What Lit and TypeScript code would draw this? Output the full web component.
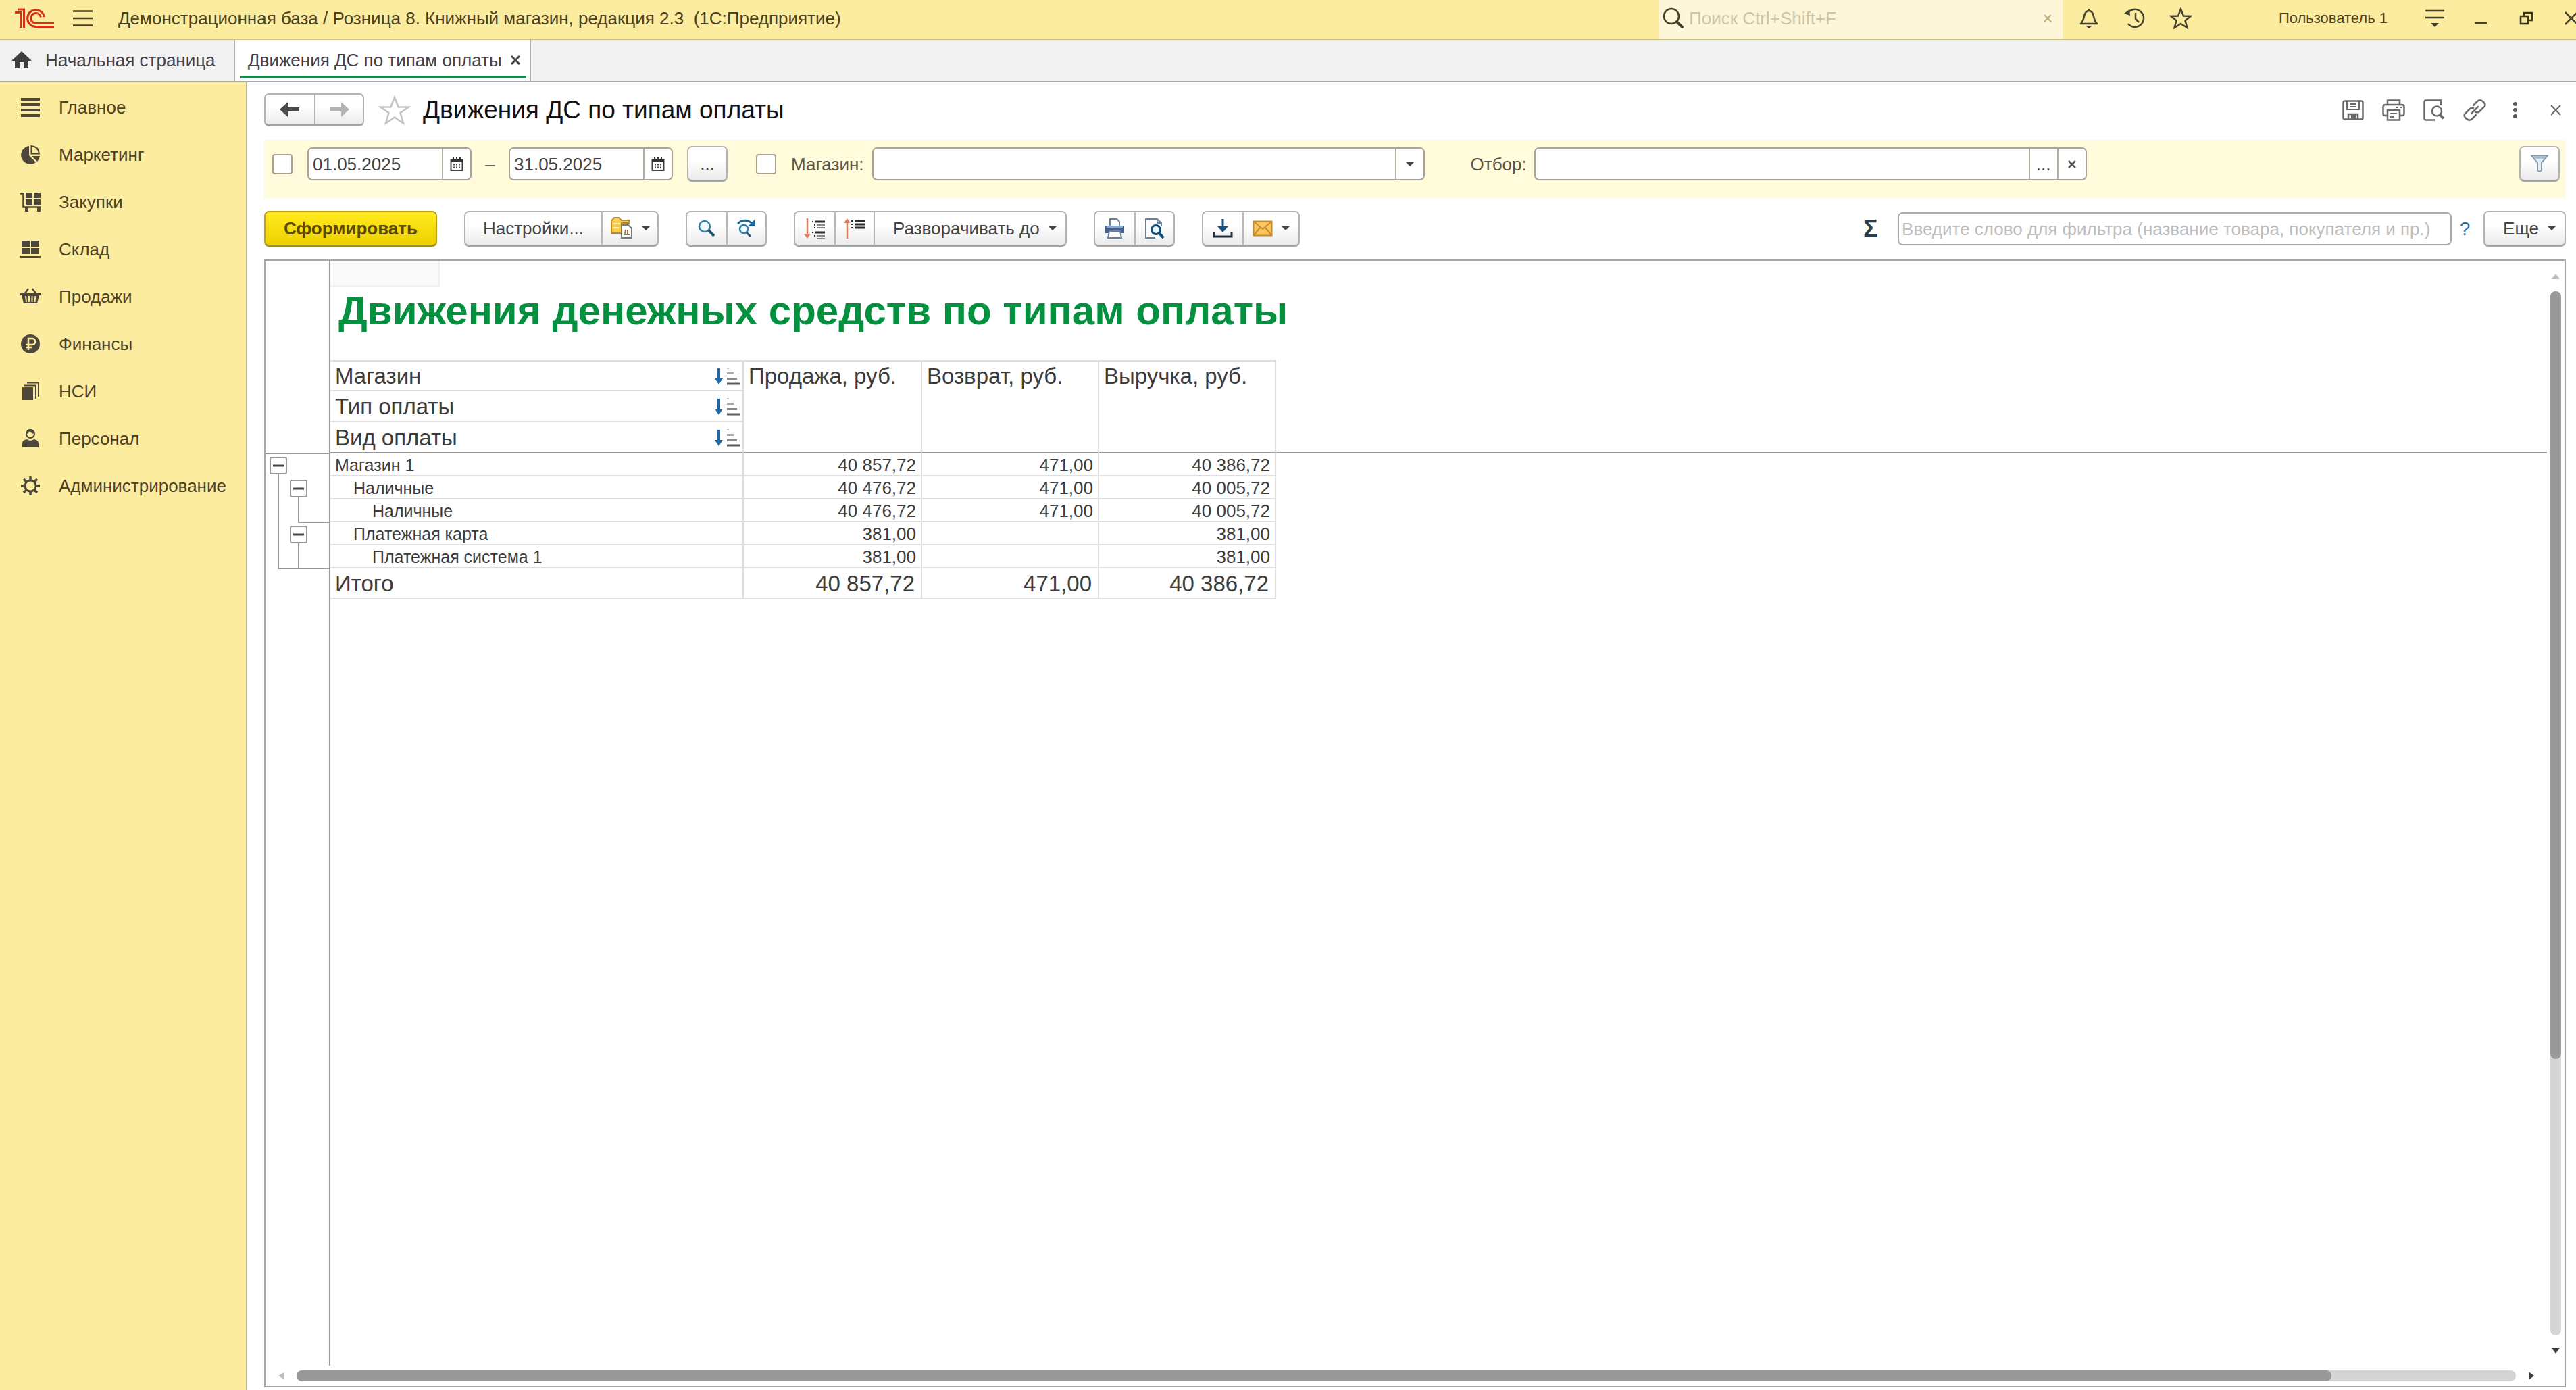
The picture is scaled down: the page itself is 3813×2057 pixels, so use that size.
import { LitElement, html, svg, css, nothing, type TemplateResult } from "lit";
import { customElement, state } from "lit/decorators.js";
import { classMap } from "lit/directives/class-map.js";
import { styleMap } from "lit/directives/style-map.js";

const pic = (w: number, h: number, body: TemplateResult) =>
  html`<svg width=${w} height=${h} viewBox="0 0 ${w} ${h}" fill="none" aria-hidden="true">${body}</svg>`;

const icons = {
  logo: pic(58, 30, svg`<g stroke="#d5301c" stroke-width="3"><path d="M4 2H13.5V29"/><path d="M0 6.500H8.500V29"/><path d="M43.500 13A12.500 12.500 0 1 0 31 27.500H58"/><path d="M38.500 13.500A7.500 7.500 0 1 0 31 22.500H58"/></g>`),
  burger: pic(29, 26, svg`<path d="M0 2.500H29M0 13H29M0 23.500H29" stroke="#4a421f" stroke-width="2.500"/>`),
  search: pic(32, 32, svg`<circle cx="14" cy="13" r="11" stroke="#44402c" stroke-width="2.500"/><path d="M22 21L30 29" stroke="#44402c" stroke-width="4" stroke-linecap="round"/>`),
  bell: pic(30, 32, svg`<path d="M15 2v3M3 24H27C24 21 23 18 22 13C21 8 19 5 15 5S9 8 8 13C7 18 6 21 3 24Z" stroke="#44402c" stroke-width="2.500" stroke-linejoin="round"/><path d="M10 27H20L15 31Z" fill="#44402c"/>`),
  history: pic(32, 32, svg`<path d="M4.500 10A13 13 0 1 1 6 24" stroke="#44402c" stroke-width="2.500"/><path d="M0 9L9 12L8 3Z" fill="#44402c"/><path d="M17 8V17L22 22" stroke="#44402c" stroke-width="2.500"/>`),
  star: pic(34, 32, svg`<path d="M17 2.500L21 12.500L31.500 13L23.500 19.500L26.500 30L17 24L7.500 30L10.500 19.500L2.500 13L13 12.500Z" stroke="#44402c" stroke-width="2.500"/>`),
  sysmenu: pic(30, 28, svg`<path d="M1 3H29M1 13H29" stroke="#44402c" stroke-width="2.500"/><path d="M9 21H21L15 27Z" fill="#44402c"/>`),
  minimize: pic(20, 20, svg`<path d="M1 17H19" stroke="#44402c" stroke-width="2.500"/>`),
  restore: pic(22, 20, svg`<path d="M2 7H13V18H2ZM7 7V2H19V13H13" stroke="#3b341a" stroke-width="2.500"/>`),
  closeWin: pic(17, 20, svg`<path d="M1 1L19 19M19 1L1 19" stroke="#44402c" stroke-width="2.500"/>`),
  home: pic(30, 26, svg`<path d="M15 0L30 14H25V25H18V16H12V25H5V14H0Z" fill="#3f3f3f"/>`),
  tabClose: pic(16, 16, svg`<path d="M2 2L14 14M14 2L2 14" stroke="#444" stroke-width="3"/>`),
  smallClose: pic(14, 14, svg`<path d="M2 2L12 12M12 2L2 12" stroke="#555" stroke-width="2.500"/>`),
  paleClose: pic(14, 14, svg`<path d="M2 2L12 12M12 2L2 12" stroke="#b9ab79" stroke-width="2"/>`),
  back: pic(30, 22, svg`<path d="M0 11L12 0V8H29V14H12V22Z" fill="#4a4a4a"/>`),
  forward: pic(30, 22, svg`<path d="M30 11L18 0V8H1V14H18V22Z" fill="#b3b3b3"/>`),
  favorite: pic(48, 46, svg`<path d="M24 4L29.500 18.500H45L32.500 27L37 42.500L24 33.500L11 42.500L15.500 27L3 18.500H18.500Z" stroke="#c3c3c3" stroke-width="2.500"/>`),
  save: pic(32, 30, svg`<g stroke="#6a6a6a" stroke-width="2.500"><path d="M4 1.500H28Q30.500 1.500 30.500 4V26Q30.500 28.500 28 28.500H4Q1.500 28.500 1.500 26V4Q1.500 1.500 4 1.500Z"/><path d="M7 2V14H25V2M11 6H21M11 10H21" stroke-width="2"/><path d="M9 28V21H23V28"/></g><path d="M13 22H20V28H13Z" fill="#6a6a6a"/>`),
  print: pic(34, 32, svg`<g stroke="#6a6a6a" stroke-width="2.500"><path d="M8 8V1.500H26V8M8 24H4Q1.500 24 1.500 21V11Q1.500 8 5 8H29Q32.500 8 32.500 11V21Q32.500 24 30 24H26"/><path d="M8 16H26V30.500H8Z"/><path d="M12 21H22M12 26H18" stroke-width="2"/></g><path d="M20 11H23V13H20ZM26 11H29V13H26Z" fill="#6a6a6a"/>`),
  preview: pic(32, 32, svg`<path d="M26 9V1.500H4Q1.500 1.500 1.500 4V28Q1.500 30.500 4 30.500H17" stroke="#6a6a6a" stroke-width="2.500"/><circle cx="20" cy="17.500" r="7" stroke="#6a6a6a" stroke-width="2.500"/><path d="M24 22L30 28.500" stroke="#6a6a6a" stroke-width="4"/>`),
  link: pic(34, 34, svg`<g stroke="#6a6a6a" stroke-width="2.500" stroke-linecap="round"><path d="M15 10L21 4Q25 0 30 5T30 13L24 19Q22 21 19 20"/><path d="M19 24L13 30Q9 34 4 29T4 21L10 15Q12 13 15 14"/><path d="M12 22L22 12"/></g>`),
  dots: pic(8, 24, svg`<circle cx="4" cy="3" r="3" fill="#555"/><circle cx="4" cy="12" r="3" fill="#555"/><circle cx="4" cy="21" r="3" fill="#555"/>`),
  closePage: pic(16, 16, svg`<path d="M1 1L15 15M15 1L1 15" stroke="#666" stroke-width="2"/>`),
  calendar: pic(20, 22, svg`<path d="M1.500 4H18.500V20H1.500Z" stroke="#444" stroke-width="2"/><path d="M1 3H19V8H1ZM4 0H6V4H4ZM9 0H11V4H9ZM14 0H16V4H14Z" fill="#333"/><path d="M5 11.500H15.500M5 15.500H15.500" stroke="#444" stroke-width="2" stroke-dasharray="2 2"/>`),
  caret: pic(12, 6, svg`<path d="M0 0H12L6 6Z" fill="#444"/>`),
  funnel: pic(28, 28, svg`<path d="M2 2H26L17 13V24Q14 28 11 24V13Z" fill="#e3ecf3" stroke="#8b97a5" stroke-width="2"/><path d="M4 3H24L21 7H7Z" fill="#a9c2d6"/>`),
  folder: pic(34, 34, svg`<path d="M2 24V6L6 1H13L17 5H28V9H17V24Z" fill="#f7cd52" stroke="#b98a25" stroke-width="2"/><path d="M4 10H15M4 16H13" stroke="#fff0a8" stroke-width="2"/><path d="M17 12H27L32 17V31H17Z" fill="#fff" stroke="#777" stroke-width="2"/><path d="M22 26L23 19M26 19V26" stroke="#b66a4a" stroke-width="2"/><path d="M20 26H29" stroke="#6a8a5a" stroke-width="2"/>`),
  find: pic(26, 26, svg`<circle cx="10" cy="10" r="8" fill="#f4fbff" stroke="#2f7fa8" stroke-width="2.500"/><path d="M16 16L24 24" stroke="#1f5577" stroke-width="4"/>`),
  findNext: pic(28, 28, svg`<path d="M1 7Q10 -2 22 6" stroke="#1c6598" stroke-width="3"/><path d="M26 1V11H16Z" fill="#1c6598"/><circle cx="10" cy="15" r="6" fill="#f4fbff" stroke="#2f7fa8" stroke-width="2.500"/><path d="M14 20L20 26" stroke="#1f5577" stroke-width="3"/>`),
  expand: pic(32, 32, svg`<path d="M5 1V26" stroke="#dd7f5e" stroke-width="2.500"/><path d="M0 24H10L5 31Z" fill="#dd7f5e"/><path d="M16 6H31M16 22H31" stroke="#2b2b2b" stroke-width="3"/><path d="M19 11H31M19 15H31M19 27H31M19 31H31" stroke="#8b8b8b" stroke-width="2"/><path d="M12 6H14M12 22H14M15 11H17M15 15H17M15 27H17" stroke="#2b2b2b" stroke-width="2"/>`),
  collapse: pic(32, 32, svg`<path d="M5 6V31" stroke="#dd7f5e" stroke-width="2.500"/><path d="M0 8H10L5 1Z" fill="#dd7f5e"/><path d="M16 5H31M16 10H31M16 15H31" stroke="#2b2b2b" stroke-width="3"/><path d="M11 5H13M11 10H13M11 15H13" stroke="#2b2b2b" stroke-width="2"/>`),
  printer: pic(30, 30, svg`<path d="M8 12V1H18L22 5V12" fill="#fff" stroke="#6b7f96" stroke-width="2"/><path d="M1 11H29V22H1Z" fill="#41618f"/><path d="M3 13H27" stroke="#8fa8c9" stroke-width="2"/><path d="M7 19H23L25 29H5Z" fill="#fff" stroke="#6b7f96" stroke-width="2"/>`),
  pagePreview: pic(30, 32, svg`<path d="M16 30H2V2H19L25 8V13" fill="#fff" stroke="#6b8098" stroke-width="2"/><path d="M19 2V8H25" stroke="#6b8098" stroke-width="2"/><circle cx="17" cy="18" r="6.500" fill="#eaf6ff" stroke="#12507c" stroke-width="3"/><path d="M22 23L28 30" stroke="#12507c" stroke-width="4"/>`),
  download: pic(30, 28, svg`<path d="M15 0V14" stroke="#174f7c" stroke-width="3"/><path d="M7 11H23L15 20Z" fill="#174f7c"/><path d="M2 20V26H28V20" stroke="#222f3a" stroke-width="3"/>`),
  mail: pic(30, 24, svg`<path d="M1.500 1.500H28.500V22.500H1.500Z" fill="#fbc65c" stroke="#c98a2c" stroke-width="2"/><path d="M2 2L15 13L28 2M2 22L11 11M28 22L19 11" stroke="#c98a2c" stroke-width="2"/>`),
  sort: pic(40, 26, svg`<path d="M7 1V18" stroke="#1f67a8" stroke-width="4"/><path d="M1 16H13L7 25Z" fill="#1f67a8"/><path d="M19 1H22" stroke="#bbb" stroke-width="2"/><path d="M19 8.500H29" stroke="#aaa" stroke-width="3"/><path d="M19 16.500H34" stroke="#8a8a8a" stroke-width="3"/><path d="M19 24H39" stroke="#5a5a5a" stroke-width="3"/>`),
  minus: pic(16, 4, svg`<path d="M0 2H16" stroke="#444" stroke-width="3"/>`),
  up: pic(12, 8, svg`<path d="M0 8L6 0L12 8Z" fill="#bcbcbc"/>`),
  down: pic(12, 8, svg`<path d="M0 0H12L6 8Z" fill="#3f3f3f"/>`),
  left: pic(8, 10, svg`<path d="M8 0V10L0 5Z" fill="#bcbcbc"/>`),
  right: pic(8, 12, svg`<path d="M0 0V12L8 6Z" fill="#3f3f3f"/>`),
};

const C = "#4c463b";
const sections = [
  { name: "Главное", icon: pic(32, 30, svg`<path d="M2 3H30M2 11H30M2 19H30M2 27H30" stroke=${C} stroke-width="4"/>`) },
  { name: "Маркетинг", icon: pic(32, 30, svg`<path d="M14 2V16L24 26A13.500 13.500 0 1 1 14 2Z" fill=${C}/><path d="M17.500 13.500V2Q28 3 29 13.500Z" stroke=${C} stroke-width="2"/><path d="M18 17H30Q29 22 26 25Z" fill=${C}/>`) },
  { name: "Закупки", icon: pic(32, 30, svg`<path d="M0 2.500H5.500V22.500H32" stroke=${C} stroke-width="2.500"/><path d="M9 1H19V9H9ZM21 1H31V9H21ZM9 11H19V19H9ZM21 11H31V19H21ZM8 23H13V29H8ZM26 23H31V29H26Z" fill=${C}/>`) },
  { name: "Склад", icon: pic(32, 30, svg`<path d="M3 2H15V11H3ZM17 2H29V11H17ZM3 13H15V22H3ZM17 13H29V22H17ZM1 25H31V28H1Z" fill=${C}/>`) },
  { name: "Продажи", icon: pic(32, 30, svg`<path d="M8 10L13 3M24 10L19 3" stroke=${C} stroke-width="2.500"/><path d="M1 9H31V13H29L26 25H6L3 13H1Z" fill=${C}/><path d="M9 14L10 23M14 14V23M18.500 14V23M23.500 14L22.500 23" stroke="#fcec9f" stroke-width="2"/>`) },
  { name: "Финансы", icon: pic(32, 30, svg`<circle cx="16" cy="15" r="14" fill=${C}/><path d="M13 24V7H18Q23 7 23 11.500T18 16H9M9 20H19" stroke="#fcec9f" stroke-width="2.500"/>`) },
  { name: "НСИ", icon: pic(32, 30, svg`<path d="M4 9H20V28H4Z" fill=${C}/><path d="M7 6.500H24V26M11 2.500H28V23" stroke=${C} stroke-width="2"/>`) },
  { name: "Персонал", icon: pic(32, 30, svg`<circle cx="16" cy="8" r="6" stroke=${C} stroke-width="2"/><path d="M10 8Q10 1 16 1T22 8Q16 7 15 4Q13 8 10 8Z" fill=${C}/><path d="M4 28V22Q4 17 11 16Q16 20 21 16Q28 17 28 22V28Z" fill=${C}/>`) },
  { name: "Администрирование", icon: pic(32, 30, svg`<circle cx="16" cy="15" r="8" stroke=${C} stroke-width="3"/><path d="M16 1V7M16 23V29M2 15H8M24 15H30M6 5L10 9M26 5L22 9M6 25L10 21M26 25L22 21" stroke=${C} stroke-width="3.500"/>`) },
];

interface Row { name: string; level: number; values: string[]; tree: string[]; }

const rows: Row[] = [
  { name: "Магазин 1", level: 0, values: ["40 857,72", "471,00", "40 386,72"], tree: ["toggle", "", ""] },
  { name: "Наличные", level: 1, values: ["40 476,72", "471,00", "40 005,72"], tree: ["v", "toggle", ""] },
  { name: "Наличные", level: 2, values: ["40 476,72", "471,00", "40 005,72"], tree: ["v", "end", "h"] },
  { name: "Платежная карта", level: 1, values: ["381,00", "", "381,00"], tree: ["v", "toggle", ""] },
  { name: "Платежная система 1", level: 2, values: ["381,00", "", "381,00"], tree: ["end", "cross", "h"] },
];
const groupings = ["Магазин", "Тип оплаты", "Вид оплаты"];
const measures = ["Продажа, руб.", "Возврат, руб.", "Выручка, руб."];
const totals = ["40 857,72", "471,00", "40 386,72"];

@customElement("app-root")
export class AppRoot extends LitElement {
  @state() private vertical = 73.5;
  @state() private horizontal = 91.7;

  static styles = css`
    :host { display: flex; flex-direction: column; min-height: 100vh; background: #fff; color: #444;
      font-family: "Liberation Sans", Arial, sans-serif; font-size: 26px; line-height: 32px; }
    * { box-sizing: border-box; }
    svg { display: block; flex: none; }
    button, input, select { font: inherit; color: inherit; margin: 0; padding: 0; border: 0; background: none; border-radius: 0; outline: none; }
    button { display: flex; align-items: center; justify-content: center; white-space: nowrap; cursor: pointer; }
    input, select { min-width: 0; appearance: none; }
    .top { display: flex; align-items: center; height: 59px; overflow: hidden; background: #fbec9f; border-bottom: 2px solid #c5bb86; color: #4a4120; white-space: nowrap; }
    .top .logo { margin: 0 28px 4px 22px; }
    .top .burger { margin-bottom: 4px; }
    .top .name { margin: 0 auto 4px 38px; }
    .find { display: flex; align-items: center; gap: 8px; flex: 0 1 597px; height: 57px; padding: 0 8px 4px 4px; margin-right: 5px; background: #fef6d8; }
    .find input { flex: 1; }
    .find input::placeholder { color: #cdc6a4; opacity: 1; }
    .find button { width: 28px; height: 32px; }
    .cell { width: 68px; height: 52px; margin-bottom: 4px; flex: none; }
    .last { width: 39px; padding-left: 22px; }
    .user { width: 308px; padding-right: 36px; margin-bottom: 4px; text-align: right; font-size: 22px; }
    .tabs { display: flex; height: 63px; background: #f2f2f2; border-bottom: 2px solid #aaa; color: #46404a; white-space: nowrap; }
    .tab { display: flex; align-items: center; padding: 0 15px 2px 19px; gap: 12px; border-right: 2px solid #b0b0b0; }
    .tab a { color: inherit; text-decoration: none; display: flex; align-items: center; gap: 20px; }
    .tab.home { width: 348px; padding-left: 17px; }
    .tab.active { width: 438px; background: linear-gradient(#14854b, #14854b) 7px 53px / 424px 4px no-repeat #fff; }
    .work { display: flex; flex: 1; }
    .side { width: 366px; flex: none; background: #fcec9f; border-right: 2px solid #bdb68e; padding-top: 2px; }
    .side a { display: flex; align-items: center; gap: 26px; height: 70px; padding-left: 29px; color: #4d4226; text-decoration: none; }
    .main { display: flex; flex-direction: column; flex: 1; min-width: 0; padding: 0 15px 4px 25px; }
    .titlebar { display: flex; align-items: center; padding: 16px 0 20px; margin-right: -15px; }
    h1 { margin: 0 auto 0 18px; font-size: 37px; line-height: 48px; font-weight: 400; color: #111; white-space: nowrap; }
    .fav { margin-left: 21px; width: 48px; height: 48px; }
    .tool { width: 60px; height: 48px; }
    .group { display: flex; flex: none; height: 53px; border: 2px solid #b3b3b3; border-bottom: 3px solid #a3a3a3; border-radius: 7px; background: linear-gradient(#fff 40%, #ebebeb); }
    .group button { min-width: 58px; padding: 0 10px; gap: 13px; color: #444; }
    .group button + button { border-left: 2px solid #b8b8b8; }
    .group.nav { height: 49px; }
    .group.nav button { width: 72px; }
    .group .wide { width: 201px; }
    .group .expand { padding: 0 13px 0 27px; }
    .group .menu { width: 83px; padding: 0 10px; }
    .params { display: flex; align-items: center; padding: 9px 9px 24px 12px; background: #fffbdb; white-space: nowrap; }
    .check { width: 30px; height: 30px; flex: none; background: #fff; border: 2px solid #aaa08f; border-radius: 4px; }
    .check:checked { background: #777; }
    .box { display: flex; height: 49px; border: 2px solid #aaa296; border-radius: 7px; background: #fff; overflow: hidden; }
    .box input, .box select { flex: 1; padding-left: 6px; }
    .box button, .box .drop { display: flex; align-items: center; justify-content: center; flex: none; width: 42px; border-left: 2px solid #b5ada0; }
    .date { flex: none; width: 243px; margin-left: 22px; }
    .dash { width: 14px; margin: 0 0 0 20px; text-align: center; }
    .dash + .date { margin-left: 21px; }
    .params .group { margin-left: 21px; }
    .params .group button { width: 56px; min-width: 0; }
    .long { flex: 0 1 818px; }
    .params .shop { margin-left: 42px; }
    .params label { margin: 0 12px 0 22px; color: #5b5648; }
    .params .second { margin: 0 11px 0 68px; }
    .params .right { margin-left: auto; }
    .bar { display: flex; align-items: center; gap: 40px; padding: 19px 0; }
    .primary { height: 53px; width: 256px; flex: none; border: 2px solid #bda21a; border-bottom: 3px solid #a38c14; border-radius: 7px; background: linear-gradient(#ffea1f, #efd000); color: #5a4a00; font-weight: 700; }
    .filter { display: flex; align-items: center; justify-content: flex-end; flex: 1; min-width: 0; }
    .sum { font-size: 36px; font-weight: 700; color: #2f3f4a; margin-right: 23px; width: 28px; }
    .filter .box { flex: 0 1 820px; border-color: #aaa; }
    .filter input { padding-left: 4px; }
    .filter input::placeholder { color: #bdbdbd; opacity: 1; }
    .help { width: 15px; margin: 0 20px 0 12px; color: #1d6fb0; font-size: 28px; }
    .sheet { display: flex; flex-direction: column; flex: 1; border: 2px solid #a5a5a5; }
    .pane { display: flex; flex: 1; }
    .gutter { width: 96px; flex: none; border-right: 2px solid #999; }
    .gutter .frozen { height: 286px; border-bottom: 2px solid #999; }
    .node { display: grid; grid-template-columns: 30px 30px 1fr; height: 34px; padding-left: 4px; }
    .node button { width: 26px; height: 26px; margin: 4px 2px; border: 2px solid #999; border-radius: 3px; background: #fff; }
    .v, .toggle { background: linear-gradient(#999, #999) 14px 0 / 2px 100% no-repeat; }
    .toggle { background-size: 2px 50%; background-position: 14px 100%; }
    .end { background: linear-gradient(#999, #999) 14px 0 / 2px 100% no-repeat, linear-gradient(#999, #999) 14px 100% / 16px 2px no-repeat; }
    .cross { background: linear-gradient(#999, #999) 14px 0 / 2px 100% no-repeat, linear-gradient(#999, #999) 0 100% / 100% 2px no-repeat; }
    .h { background: linear-gradient(#999, #999) 0 100% / 100% 2px no-repeat; }
    .report { flex: 1; min-width: 0; }
    .corner { width: 162px; height: 38px; background: #fafafa; border: 2px solid #f0f0f0; border-width: 0 2px 2px 0; }
    h2 { margin: 0 0 39px; padding: 2px 0 0 12px; font-size: 60px; line-height: 68px; font-weight: 700; color: #04913f; white-space: nowrap; }
    table { width: 100%; table-layout: fixed; border-collapse: separate; border-spacing: 0; }
    .c1 { width: 612px; } .c2 { width: 264px; } .c3 { width: 262px; } .c4 { width: 262px; }
    th, td { padding: 2px 7px 0 7px; border: 0 solid #dedede; border-width: 0 2px 2px 0; text-align: right; white-space: nowrap; font-weight: 400; color: #3c3c3c; }
    th { text-align: left; vertical-align: top; }
    tbody th, tbody td { height: 34px; line-height: 30px; font-size: 26px; }
    tbody th { font-size: 25px; }
    thead th, tfoot th, tfoot td { height: 46px; line-height: 42px; font-size: 33px; }
    tfoot td { padding-right: 9px; }
    thead tr:first-child th { border-top: 2px solid #dedede; line-height: 40px; }
    thead tr:last-child th, thead .measure, thead .rest { border-bottom-color: #999; }
    thead .rest { border-right: 0; }
    thead tr:first-child .rest { border-top-color: #fff; }
    tbody .rest, tfoot .rest { border: 0; }
    tbody .l1 { padding-left: 34px; } tbody .l2 { padding-left: 62px; }
    .order { display: flex; align-items: center; justify-content: space-between; margin-right: -5px; }
    .vbar { display: flex; flex-direction: column; align-items: center; width: 26px; flex: none; }
    .vbar button { width: 26px; height: 45px; }
    .track { width: 16px; flex: 1; border-radius: 8px; background: #d4d4d4; }
    .thumb { height: 100%; border-radius: 8px; background: #999; }
    .hbar { display: flex; align-items: center; height: 30px; padding-right: 26px; }
    .hbar button { width: 46px; height: 30px; }
    .hbar .track { height: 16px; width: auto; }
  `;

  private iconButton(label: string, icon: TemplateResult, cls = "") {
    return html`<button class=${cls} aria-label=${label} title=${label}>${icon}</button>`;
  }

  private dateBox(label: string, value: string) {
    return html`<div class="box date"><input type="text" aria-label=${label} .value=${value} />${this.iconButton("Выбрать дату", icons.calendar)}</div>`;
  }

  private renderTop() {
    const b = this.iconButton;
    return html`<header class="top">
      <span class="logo">${icons.logo}</span>
      ${b("Меню", icons.burger, "burger")}
      <span class="name">Демонстрационная база / Розница 8. Книжный магазин, редакция 2.3&nbsp; (1С:Предприятие)</span>
      <div class="find">${icons.search}<input type="text" aria-label="Поиск" placeholder="Поиск Ctrl+Shift+F" />${b("Очистить", icons.paleClose)}</div>
      ${b("Уведомления", icons.bell, "cell")}${b("История", icons.history, "cell")}${b("Избранное", icons.star, "cell")}
      <span class="user">Пользователь 1</span>
      ${b("Настройки окна", icons.sysmenu, "cell")}${b("Свернуть", icons.minimize, "cell")}${b("Восстановить", icons.restore, "cell")}${b("Закрыть", icons.closeWin, "cell last")}
    </header>
    <nav class="tabs" aria-label="Вкладки">
      <div class="tab home"><a href="#home">${icons.home}Начальная страница</a></div>
      <div class="tab active"><a href="#report">Движения ДС по типам оплаты</a>${b("Закрыть вкладку", icons.tabClose)}</div>
    </nav>`;
  }

  private renderParams() {
    const b = this.iconButton;
    return html`<div class="params">
      <input class="check" type="checkbox" aria-label="Период" />
      ${this.dateBox("Начало периода", "01.05.2025")}
      <span class="dash">–</span>
      ${this.dateBox("Конец периода", "31.05.2025")}
      <div class="group"><button aria-label="Выбрать период">...</button></div>
      <input class="check shop" id="use-shop" type="checkbox" aria-label="Отбор по магазину" />
      <label for="shop">Магазин:</label>
      <div class="box long"><select id="shop"><option></option></select><span class="drop">${icons.caret}</span></div>
      <label class="second" for="selection">Отбор:</label>
      <div class="box long"><input id="selection" type="text" /><button aria-label="Выбрать">...</button>${b("Очистить", icons.smallClose)}</div>
      <div class="group right">${b("Фильтр", icons.funnel)}</div>
    </div>`;
  }

  private renderBar() {
    const b = this.iconButton;
    return html`<div class="bar">
      <button class="primary">Сформировать</button>
      <div class="group"><button class="wide">Настройки...</button><button class="menu" aria-label="Варианты настроек">${icons.folder}${icons.caret}</button></div>
      <div class="group">${b("Найти", icons.find)}${b("Найти далее", icons.findNext)}</div>
      <div class="group">${b("Развернуть", icons.expand)}${b("Свернуть", icons.collapse)}<button class="expand">Разворачивать до ${icons.caret}</button></div>
      <div class="group">${b("Печать", icons.printer)}${b("Просмотр", icons.pagePreview)}</div>
      <div class="group">${b("Сохранить", icons.download)}<button class="menu" aria-label="Отправить">${icons.mail}${icons.caret}</button></div>
      <div class="filter">
        <span class="sum">Σ</span>
        <div class="box"><input type="text" aria-label="Фильтр" placeholder="Введите слово для фильтра (название товара, покупателя и пр.)" /></div>
        <button class="help" aria-label="Справка">?</button>
        <div class="group"><button class="expand">Еще ${icons.caret}</button></div>
      </div>
    </div>`;
  }

  private renderSheet() {
    const b = this.iconButton;
    return html`<section class="sheet">
      <div class="pane">
        <div class="gutter">
          <div class="frozen"></div>
          ${rows.map((r) => html`<div class="node">${r.tree.map((t) => html`<span class=${classMap({ [t || "none"]: true })}>${t === "toggle" ? b("Свернуть группу", icons.minus) : nothing}</span>`)}</div>`)}
        </div>
        <div class="report">
          <div class="corner"></div>
          <h2>Движения денежных средств по типам оплаты</h2>
          <table>
            <colgroup><col class="c1" /><col class="c2" /><col class="c3" /><col class="c4" /><col /></colgroup>
            <thead>
              ${groupings.map((g, i) => html`<tr>
                <th scope="col"><div class="order">${g}${icons.sort}</div></th>
                ${i === 0 ? html`${measures.map((m) => html`<th class="measure" scope="col" rowspan="3">${m}</th>`)}<th class="rest" rowspan="3"></th>` : nothing}
              </tr>`)}
            </thead>
            <tbody>
              ${rows.map((r) => html`<tr><th scope="row" class=${"l" + r.level}>${r.name}</th>${r.values.map((v) => html`<td>${v}</td>`)}<td class="rest"></td></tr>`)}
            </tbody>
            <tfoot><tr><th scope="row">Итого</th>${totals.map((v) => html`<td>${v}</td>`)}<td class="rest"></td></tr></tfoot>
          </table>
        </div>
        <div class="vbar">${b("Вверх", icons.up)}<div class="track"><div class="thumb" style=${styleMap({ height: this.vertical + "%" })}></div></div>${b("Вниз", icons.down)}</div>
      </div>
      <div class="hbar">${b("Влево", icons.left)}<div class="track"><div class="thumb" style=${styleMap({ width: this.horizontal + "%" })}></div></div>${b("Вправо", icons.right)}</div>
    </section>`;
  }

  render() {
    const b = this.iconButton;
    return html`${this.renderTop()}
      <div class="work">
        <nav class="side" aria-label="Разделы">${sections.map((s) => html`<a href="#section">${s.icon}${s.name}</a>`)}</nav>
        <main class="main">
          <div class="titlebar">
            <div class="group nav">${b("Назад", icons.back)}${b("Вперед", icons.forward)}</div>
            ${b("В избранное", icons.favorite, "fav")}
            <h1>Движения ДС по типам оплаты</h1>
            ${b("Сохранить", icons.save, "tool")}${b("Печать", icons.print, "tool")}${b("Просмотр", icons.preview, "tool")}${b("Ссылка", icons.link, "tool")}${b("Еще", icons.dots, "tool")}${b("Закрыть", icons.closePage, "tool")}
          </div>
          ${this.renderParams()}${this.renderBar()}${this.renderSheet()}
        </main>
      </div>`;
  }
}
